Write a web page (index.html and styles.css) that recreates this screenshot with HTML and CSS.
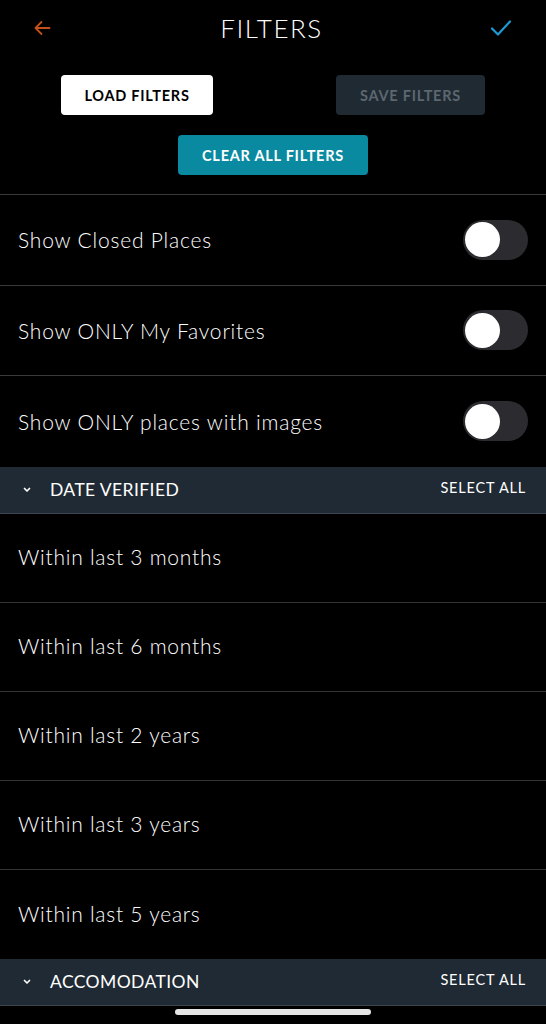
FILE: index.html
```html
<!DOCTYPE html>
<html>
<head>
<meta charset="utf-8">
<link rel="stylesheet" href="styles.css">
</head>
<body>
<div class="screen">
  <header class="topbar">
    <button class="icon-btn back" aria-label="Back">
      <svg width="18" height="16" viewBox="0 0 18 16"><path d="M16.5 8H2.5M8.5 2L2.5 8l6 6" fill="none" stroke="#c4501c" stroke-width="1.8" stroke-linecap="round" stroke-linejoin="round"/></svg>
    </button>
    <h1 class="title">FILTERS</h1>
    <button class="icon-btn done" aria-label="Done">
      <svg width="22" height="18" viewBox="0 0 22 18"><path d="M2 9.5l6 6L20 2.5" fill="none" stroke="#1c9bd6" stroke-width="2.2" stroke-linecap="round" stroke-linejoin="round"/></svg>
    </button>
  </header>

  <div class="actions">
    <div class="action-row">
      <button class="btn btn-light">LOAD FILTERS</button>
      <button class="btn btn-disabled">SAVE FILTERS</button>
    </div>
    <button class="btn btn-teal">CLEAR ALL FILTERS</button>
  </div>

  <ul class="list toggles">
    <li class="row"><span class="label">Show Closed Places</span><span class="switch"><span class="knob"></span></span></li>
    <li class="row"><span class="label">Show ONLY My Favorites</span><span class="switch"><span class="knob"></span></span></li>
    <li class="row"><span class="label">Show ONLY places with images</span><span class="switch"><span class="knob"></span></span></li>
  </ul>

  <div class="section">
    <span class="chev"><svg width="10" height="7" viewBox="0 0 10 7"><path d="M2.5 2.5l2.5 2.5 2.5-2.5" fill="none" stroke="#fff" stroke-width="1.7" stroke-linecap="round" stroke-linejoin="round"/></svg></span>
    <span class="section-title">DATE VERIFIED</span>
    <span class="select-all">SELECT ALL</span>
  </div>

  <ul class="list options">
    <li class="opt">Within last 3 months</li>
    <li class="opt">Within last 6 months</li>
    <li class="opt">Within last 2 years</li>
    <li class="opt">Within last 3 years</li>
    <li class="opt">Within last 5 years</li>
  </ul>

  <div class="section">
    <span class="chev"><svg width="10" height="7" viewBox="0 0 10 7"><path d="M2.5 2.5l2.5 2.5 2.5-2.5" fill="none" stroke="#fff" stroke-width="1.7" stroke-linecap="round" stroke-linejoin="round"/></svg></span>
    <span class="section-title">ACCOMODATION</span>
    <span class="select-all">SELECT ALL</span>
  </div>

  <div class="home-bar"><span class="home-indicator"></span></div>
</div>
</body>
</html>
```

FILE: styles.css
```css
* { box-sizing: border-box; }
html, body { margin: 0; padding: 0; background: #000; }
body {
  font-family: "Lato", "Open Sans", "DejaVu Sans", sans-serif;
  color: #fff;
  width: 546px;
  height: 1024px;
  overflow: hidden;
}
.screen { display: flex; flex-direction: column; }

.topbar {
  height: 56px;
  display: flex;
  align-items: center;
  justify-content: space-between;
  padding: 0 34px 0 31px;
}
.icon-btn {
  background: none; border: 0; padding: 0;
  width: 22px; height: 22px;
  display: flex; align-items: center; justify-content: center;
}
.title {
  margin: 0;
  font-weight: 300;
  font-size: 26px;
  letter-spacing: 1.5px;
  color: #fff;
}

.actions {
  display: flex;
  flex-direction: column;
  align-items: center;
  gap: 20px;
  padding: 19px 0 19px;
  border-bottom: 1px solid #3a3a3a;
}
.action-row {
  width: 100%;
  display: flex;
  justify-content: space-between;
  padding: 0 61px 0 61px;
}
.btn {
  height: 40px;
  border: 0;
  border-radius: 4px;
  font-family: inherit;
  font-weight: 700;
  font-size: 14.5px;
  letter-spacing: 0.75px;
}
.btn-light { width: 152px; background: #fff; color: #000; }
.btn-disabled { width: 149px; background: #1f2a33; color: #5d6770; }
.btn-teal { width: 190px; background: #0a8aa1; color: #fff; }

.list { list-style: none; margin: 0; padding: 0; }
.row {
  height: 90.5px;
  display: flex;
  align-items: center;
  justify-content: space-between;
  padding: 0 18px;
  border-bottom: 1px solid #3a3a3a;
}
.row:last-child { border-bottom: 0; }
.label, .opt {
  font-weight: 300;
  font-size: 21px;
  color: #fff;
}
.label { letter-spacing: 0.8px; }
.opt { letter-spacing: 0.75px; }
.switch {
  width: 65px; height: 40px;
  border-radius: 20px;
  background: #2c2c30;
  display: flex;
  align-items: center;
  padding: 0 2px;
}
.knob {
  width: 35px; height: 35px;
  border-radius: 50%;
  background: #fff;
}

.section {
  height: 47px;
  background: #1f2a34;
  border-bottom: 1px solid #3a4550;
  display: flex;
  align-items: center;
  padding: 0 20px 0 22px;
}
.chev { width: 12px; display: flex; margin-right: 16px; }
.section-title {
  flex: 1;
  font-size: 17.5px;
  font-weight: 400;
  letter-spacing: 0.4px;
}
.select-all {
  font-size: 14.5px;
  font-weight: 400;
  letter-spacing: 0.8px;
  margin-top: -4px;
}

.opt {
  height: 89px;
  display: flex;
  align-items: center;
  padding: 0 18px 2px;
  border-bottom: 1px solid #333;
}
.opt:last-child { border-bottom: 0; }

.home-bar {
  height: 20px;
  display: flex;
  justify-content: center;
  padding-top: 3px;
}
.home-indicator {
  width: 196px; height: 6px;
  border-radius: 3px;
  background: #e6e6e6;
}
```
